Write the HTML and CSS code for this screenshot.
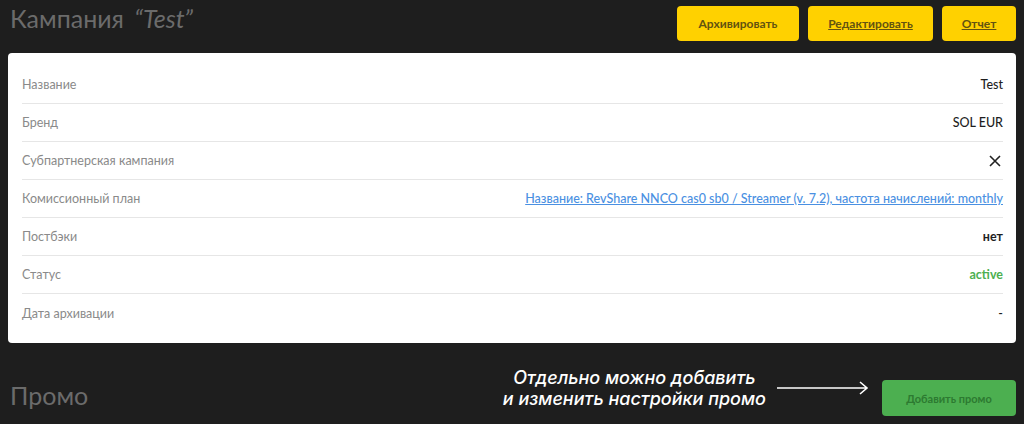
FILE: index.html
```html
<!DOCTYPE html>
<html>

<head>
  <title>Кампания</title>
  <meta charset="UTF-8">
  <link rel="stylesheet" href="styles.css">
</head>

<body>
  <div class="page">
    <div class="header">
      <h1 class="title">Кампания <i>“Test”</i></h1>
      <div class="actions">
        <a class="btn">Архивировать</a>
        <a class="btn btn-link">Редактировать</a>
        <a class="btn btn-link">Отчет</a>
      </div>
    </div>

    <div class="card">
      <div class="row">
        <span class="label">Название</span>
        <span class="value">Test</span>
      </div>
      <div class="row">
        <span class="label">Бренд</span>
        <span class="value">SOL EUR</span>
      </div>
      <div class="row">
        <span class="label">Субпартнерская кампания</span>
        <span class="value">
          <svg class="cross" width="12" height="12" viewBox="0 0 12 12">
            <path d="M1 1 L11 11 M11 1 L1 11" stroke="#222" stroke-width="1.6" fill="none" />
          </svg>
        </span>
      </div>
      <div class="row">
        <span class="label">Комиссионный план</span>
        <a class="value link">Название: RevShare NNCO cas0 sb0 / Streamer (v. 7.2), частота начислений: monthly</a>
      </div>
      <div class="row">
        <span class="label">Постбэки</span>
        <span class="value bold">нет</span>
      </div>
      <div class="row">
        <span class="label">Статус</span>
        <span class="value status">active</span>
      </div>
      <div class="row">
        <span class="label">Дата архивации</span>
        <span class="value">-</span>
      </div>
    </div>

    <div class="footer">
      <h2 class="title">Промо</h2>
      <div class="note">
        <p>Отдельно можно добавить<br>и изменить настройки промо</p>
        <svg class="arrow" width="94" height="14" viewBox="0 0 94 14">
          <path d="M1 7 H91 M84 1 L91 7 L84 13" stroke="#fff" stroke-width="1.6" fill="none" />
        </svg>
      </div>
      <a class="btn btn-green">Добавить промо</a>
    </div>
  </div>
</body>

</html>
```

FILE: styles.css
```css
* {
  padding: 0;
  margin: 0;
  box-sizing: border-box;
}

body {
  background-color: #1e1e1e;
  font-family: Lato, "Noto Sans", sans-serif;
}

.page {
  width: 1024px;
  height: 424px;
  overflow: hidden;
}

.header {
  display: flex;
  justify-content: space-between;
  align-items: flex-start;
  padding: 6px 8px 0 10px;
  height: 53px;
}

.title {
  font-size: 25px;
  font-weight: 400;
  color: #6b6b6b;
  line-height: 30px;
}

.header .title {
  margin-top: -3px;
}

.title i {
  margin-left: 4px;
}

.actions {
  display: flex;
  gap: 9px;
}

.btn {
  display: inline-flex;
  align-items: center;
  justify-content: center;
  height: 35px;
  padding: 0 20px;
  background-color: #ffd100;
  border-radius: 4px;
  color: #635310;
  font-size: 12px;
  font-weight: 700;
  cursor: pointer;
}

.btn-link {
  text-decoration: underline;
}

.actions .btn:nth-child(1) {
  width: 122px;
}

.actions .btn:nth-child(2) {
  width: 125px;
}

.actions .btn:nth-child(3) {
  width: 74px;
}

.card {
  margin: 0 8px;
  padding: 13px 13px 11px 14px;
  background-color: #fff;
  border-radius: 4px;
}

.row {
  display: flex;
  justify-content: space-between;
  align-items: center;
  height: 38px;
  border-bottom: 1px solid #e6e6e6;
  font-size: 12.5px;
}

.row:last-child {
  border-bottom: none;
}

.label {
  color: #8a8a8a;
}

.value {
  color: #1e1e1e;
  font-weight: 500;
}

.cross {
  display: block;
  margin-right: 2px;
}

.link {
  color: #4a90e2;
  text-decoration: underline;
  cursor: pointer;
}

.bold {
  font-weight: 700;
}

.status {
  color: #4caf50;
  font-weight: 700;
}

.footer {
  display: flex;
  align-items: flex-end;
  height: 81px;
  padding: 0 8px 8px 10px;
}

.footer .title {
  flex: 1;
  margin-bottom: 6px;
}

.note {
  display: flex;
  align-items: center;
  gap: 10px;
  margin-right: 12px;
  margin-bottom: 7px;
}

.note p {
  color: #fff;
  font-family: Inter, "Open Sans", sans-serif;
  font-style: italic;
  font-weight: 500;
  font-size: 18px;
  line-height: 21px;
  text-align: center;
}

.arrow {
  display: block;
}

.btn-green {
  width: 134px;
  height: 36px;
  background-color: #4caf50;
  color: #2d7a31;
  font-size: 11px;
  padding: 0;
}
```
